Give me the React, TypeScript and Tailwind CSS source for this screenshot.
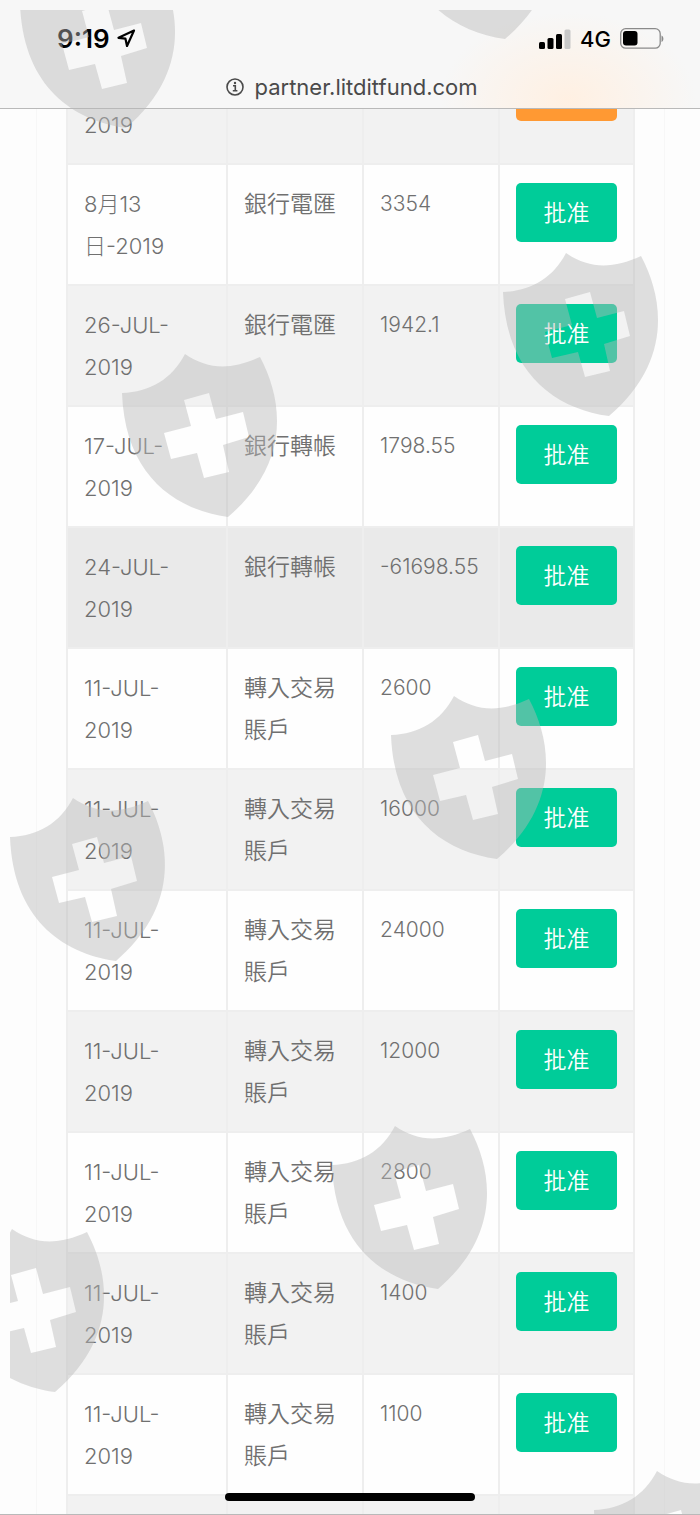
type Row = { date: [string, string]; method: string[]; amount: string; active?: boolean };

const transfer = ["轉入交易", "賬戶"];

const rows: Row[] = [
  { date: ["8月13", "日-2019"], method: ["銀行電匯"], amount: "3354" },
  { date: ["26-JUL-", "2019"], method: ["銀行電匯"], amount: "1942.1" },
  { date: ["17-JUL-", "2019"], method: ["銀行轉帳"], amount: "1798.55" },
  { date: ["24-JUL-", "2019"], method: ["銀行轉帳"], amount: "-61698.55", active: true },
  { date: ["11-JUL-", "2019"], method: transfer, amount: "2600" },
  { date: ["11-JUL-", "2019"], method: transfer, amount: "16000" },
  { date: ["11-JUL-", "2019"], method: transfer, amount: "24000" },
  { date: ["11-JUL-", "2019"], method: transfer, amount: "12000" },
  { date: ["11-JUL-", "2019"], method: transfer, amount: "2800" },
  { date: ["11-JUL-", "2019"], method: transfer, amount: "1400" },
  { date: ["11-JUL-", "2019"], method: transfer, amount: "1100" },
];

const shields = [
  [20, -35], [399, -124], [503, 253], [122, 354], [391, 696],
  [10, 798], [332, 1126], [-51, 1229], [594, 1471],
];

const cell = "border-2 border-[#eeeeee] px-4 pt-[18px] pb-[17px] align-top text-left whitespace-nowrap";

function Watermark() {
  return (
    <svg className="pointer-events-none absolute top-[10px] left-[10px] z-30 h-full w-full" aria-hidden="true">
      <g transform="translate(-10 -10)" fill="#b8b8b8" fillOpacity="0.447" fillRule="evenodd">
        {shields.map(([x, y]) => (
          <path
            key={`${x}-${y}`}
            transform={`translate(${x} ${y})`}
            d="M0 39C28 38 50 25 63 0C86 16 110 16 138 3C162 48 168 110 106 163C50 155 3 119 0 39ZM62 46L87 39L94 65L121 58L127 83L101 91L107 118L82 124L75 99L49 105L42 79L69 72Z"
          />
        ))}
      </g>
    </svg>
  );
}

function Header() {
  return (
    <header className="relative z-10 shrink-0 overflow-hidden border-b border-[#b9b9b9] bg-[#f7f7f7] font-['Inter',sans-serif]">
      <div className="absolute right-1 -bottom-20 h-44 w-64 bg-[radial-gradient(closest-side,#fff0e2,#f7f7f700)]" />
      <div className="relative flex h-16 items-center justify-between pt-[14px] pr-[36px] pl-[57px] text-black">
        <div className="flex items-center gap-[6px]">
          <span className="text-[26px] leading-[28px] font-semibold">9:19</span>
          <svg width="20" height="20" viewBox="0 0 20 20" fill="none" stroke="#000" strokeWidth="2.2" strokeLinejoin="round">
            <path d="M18 1.5L2.5 8.8L9.4 9.6L11 17Z" />
          </svg>
        </div>
        <div className="flex items-center gap-[9px]">
          <svg width="32" height="20" viewBox="0 0 32 20">
            <rect x="0" y="13" width="6" height="7" rx="1.5" />
            <rect x="8.5" y="9" width="6" height="11" rx="1.5" />
            <rect x="17" y="5" width="6" height="15" rx="1.5" />
            <rect x="25.5" y="0.5" width="6" height="19.5" rx="1.5" fill="#c8c8c8" />
          </svg>
          <span className="text-[22px] leading-[28px] font-medium">4G</span>
          <svg width="44" height="22" viewBox="0 0 44 22">
            <rect x="0.7" y="0.7" width="39.5" height="19.5" rx="5" fill="none" stroke="#8a8a8a" strokeWidth="1.3" />
            <rect x="3" y="3" width="14.5" height="14.5" rx="3" />
            <path d="M41.5 7.5C44 8.5 44 13 41.5 14Z" fill="#8a8a8a" />
          </svg>
        </div>
      </div>
      <div className="relative flex h-11 items-center justify-center gap-[10px] pt-[2px] pl-1 text-[#4a4a4a]">
        <svg width="18" height="18" viewBox="0 0 18 18" fill="none" stroke="currentColor" strokeWidth="1.6">
          <circle cx="9" cy="9" r="8" />
          <path d="M7 7.7H9.3V12.6M6.8 12.8H11.4" />
          <circle cx="9" cy="5" r="1.2" fill="currentColor" stroke="none" />
        </svg>
        <span className="text-[22px] leading-[28px]">partner.litditfund.com</span>
      </div>
    </header>
  );
}

export default function App() {
  return (
    <div className="relative flex h-screen flex-col overflow-hidden border-b border-[#b9b9b9] bg-[#fdfdfd]">
      <Header />
      <main className="mr-[35px] ml-[36px] -mt-[67px] border-x border-[#f7f7f7] px-[29px]">
        <table className="w-full table-fixed border-collapse font-['Inter','Noto_Sans_CJK_TC',sans-serif] text-[21px] leading-[42px] font-light text-[#707070]">
          <colgroup>
            <col className="w-[160px]" />
            <col className="w-[24%]" />
            <col className="w-[24%]" />
            <col />
          </colgroup>
          <tbody>
            <tr className="h-[121px] bg-[#f2f2f2]">
              <td className="border-2 border-[#eeeeee] px-4 pb-[17px] align-bottom text-[22px]">2019</td>
              <td className={cell} />
              <td className={cell} />
              <td className={cell}>
                <button type="button" aria-label="2019" className="block h-[59px] w-full rounded-[5px] bg-[#ff9933]" />
              </td>
            </tr>
            {rows.map((r, i) => (
              <tr key={i} className={r.active ? "bg-[#eaeaea]" : i % 2 ? "bg-[#f2f2f2]" : "bg-[#fefefe]"}>
                <td className={`${cell} text-[22px]`}>
                  {r.date[0]}
                  <br />
                  {r.date[1]}
                </td>
                <td className={`${cell} text-[23px] font-[350]`}>
                  {r.method.map((line) => (
                    <span key={line} className="block">{line}</span>
                  ))}
                </td>
                <td className={cell}>{r.amount}</td>
                <td className={cell}>
                  <button type="button" className="block h-[59px] w-full rounded-[5px] bg-[#00cc99] text-[23px] leading-[42px] font-[350] text-white">
                    批准
                  </button>
                </td>
              </tr>
            ))}
            <tr className="h-[121px] bg-[#f2f2f2]">
              <td className={cell} />
              <td className={cell} />
              <td className={cell} />
              <td className={cell} />
            </tr>
          </tbody>
        </table>
      </main>
      <div className="absolute bottom-[13px] left-1/2 z-20 h-2 w-[250px] -translate-x-1/2 rounded-full bg-black" />
      <Watermark />
    </div>
  );
}
